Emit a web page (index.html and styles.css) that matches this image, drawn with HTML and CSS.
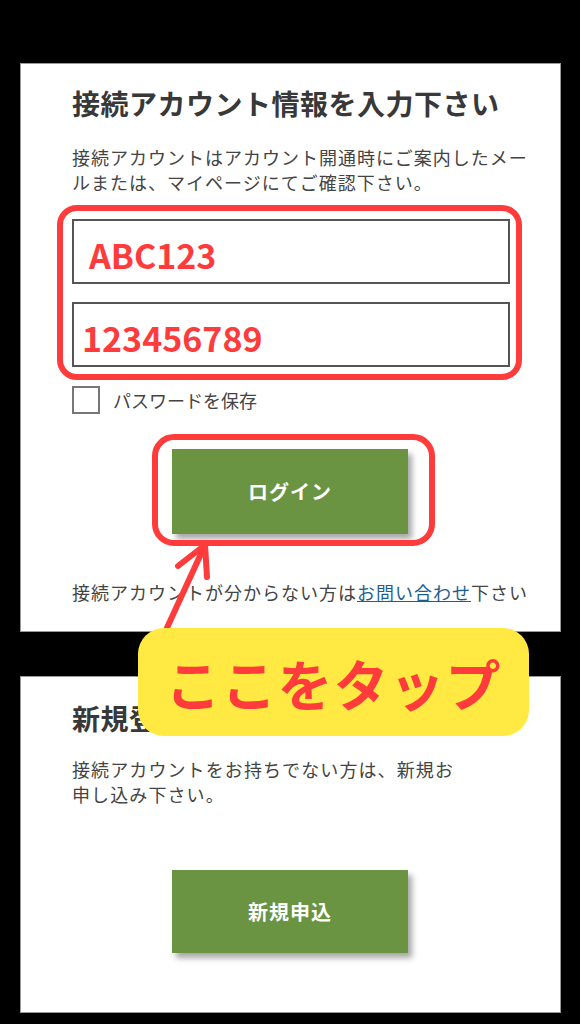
FILE: index.html
```html
<!DOCTYPE html>
<html lang="ja">
<head>
  <meta charset="UTF-8">
  <title>接続アカウント</title>
  <link rel="stylesheet" href="styles.css">
</head>
<body>

  <div class="card login-card">
    <h2>接続アカウント情報を入力下さい</h2>
    <p class="lead">接続アカウントはアカウント開通時にご案内したメールまたは、マイページにてご確認下さい。</p>

    <div class="field-group marked">
      <div class="field field-id">ABC123</div>
      <div class="field field-pass">123456789</div>
    </div>

    <label class="remember">
      <span class="check"></span>
      <span>パスワードを保存</span>
    </label>

    <div class="btn-wrap marked-btn">
      <button class="btn">ログイン</button>
    </div>

    <p class="help">接続アカウントが分からない方は<a href="#">お問い合わせ</a>下さい</p>
  </div>

  <div class="card signup-card">
    <h2>新規登録</h2>
    <p class="lead narrow">接続アカウントをお持ちでない方は、新規お申し込み下さい。</p>
    <div class="btn-wrap">
      <button class="btn">新規申込</button>
    </div>
  </div>

  <!-- annotation arrow + callout -->
  <svg class="arrow" width="70" height="110" viewBox="0 0 70 110">
    <g stroke="#ff3b3b" stroke-width="6" stroke-linecap="round" fill="none">
      <line x1="55" y1="10" x2="10" y2="108" />
      <line x1="55" y1="10" x2="28" y2="31" />
      <line x1="55" y1="10" x2="57" y2="42" />
    </g>
  </svg>
  <div class="callout">ここをタップ</div>

</body>
</html>
```

FILE: styles.css
```css
* {
  box-sizing: border-box;
}

body {
  margin: 0;
  background: #000;
  font-family: "Noto Sans CJK JP", "Noto Sans", sans-serif;
  position: relative;
  height: 1024px;
  overflow: hidden;
  padding-top: 63px;
}

.card {
  background: #fff;
  border: 1px solid #999;
  width: 541px;
  margin-left: 20px;
  padding: 19px 20px 0 51px;
}

.login-card {
  height: 569px;
}

.signup-card {
  margin-top: 44px;
  height: 337px;
  padding-top: 21px;
}

h2 {
  margin: 0;
  font-size: 28px;
  line-height: 40px;
  font-weight: 700;
  letter-spacing: 0.5px;
  color: #383838;
}

.lead {
  margin: 22px 0 0;
  font-size: 18px;
  line-height: 25px;
  letter-spacing: 1px;
  color: #444;
}

.lead.narrow {
  max-width: 388px;
  margin-top: 19px;
  letter-spacing: 1.1px;
}

.field-group {
  margin-top: 24px;
  width: 438px;
  display: flex;
  flex-direction: column;
  gap: 18px;
}

.marked,
.marked-btn {
  position: relative;
}

.marked::after {
  content: '';
  position: absolute;
  top: -14px;
  bottom: -13px;
  left: -15px;
  right: -12px;
  border: 6px solid #ff3b3b;
  border-radius: 20px;
}

.field {
  height: 65px;
  border: 2px solid #555;
  display: flex;
  align-items: center;
  padding-top: 6px;
  font-size: 34px;
  font-weight: 700;
  color: #ff3b3b;
}

.field-id {
  padding-left: 15px;
}

.field-pass {
  padding-left: 8px;
}

.remember {
  margin-top: 19px;
  display: flex;
  align-items: center;
  gap: 13px;
  font-size: 18px;
  color: #444;
}

.check {
  width: 28px;
  height: 28px;
  border: 2px solid #777;
}

.btn-wrap {
  margin-top: 35px;
  margin-left: 100px;
  width: 236px;
}

.signup-card .btn-wrap {
  margin-top: 63px;
}

.marked-btn::after {
  content: '';
  position: absolute;
  top: -15px;
  bottom: -12px;
  left: -20px;
  right: -27px;
  border: 6px solid #ff3b3b;
  border-radius: 22px;
}

.btn {
  display: block;
  width: 236px;
  height: 85px;
  border: none;
  background: #6a9342;
  color: #fff;
  font-family: inherit;
  font-size: 20px;
  font-weight: 700;
  letter-spacing: 1px;
  box-shadow: 4px 5px 6px rgba(0, 0, 0, 0.35);
}

.signup-card .btn {
  height: 83px;
}

.help {
  margin: 46px 0 0;
  font-size: 18px;
  line-height: 25px;
  letter-spacing: 1px;
  color: #444;
}

.help a {
  color: #1d5e8e;
}

.arrow {
  position: absolute;
  left: 150px;
  top: 535px;
}

.callout {
  position: absolute;
  left: 138px;
  top: 628px;
  width: 391px;
  height: 108px;
  border-radius: 26px;
  background: #ffe942;
  color: #ff3b3b;
  font-size: 55px;
  font-weight: 700;
  letter-spacing: 1px;
  display: flex;
  align-items: center;
  justify-content: center;
}
```
